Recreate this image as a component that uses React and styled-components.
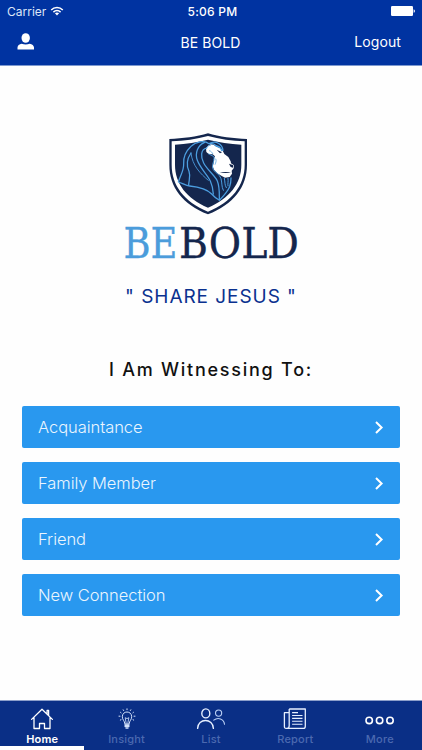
import styled, { createGlobalStyle } from "styled-components";

const options = ["Acquaintance", "Family Member", "Friend", "New Connection"];

const tabs = [
    { name: "Home", Icon: HomeIcon },
    { name: "Insight", Icon: BulbIcon },
    { name: "List", Icon: PeopleIcon },
    { name: "Report", Icon: ReportIcon },
    { name: "More", Icon: MoreIcon },
];

function WifiIcon() {
    return (
        <svg width="14" height="10" viewBox="0 0 14 10" fill="none" stroke="#fff" strokeWidth="1.5">
            <path d="M1.2 4C4.5 .6 9.5 .6 12.8 4" />
            <path d="M3.4 6.1C5.5 4.1 8.5 4.1 10.6 6.1" />
            <path d="M4.9 7.3C6.1 6.2 7.9 6.2 9.1 7.3L7 9.5Z" fill="#fff" stroke="none" />
        </svg>
    );
}

function BatteryIcon() {
    return (
        <svg width="26" height="10" viewBox="0 0 26 10" fill="#fff">
            <rect x="1" y="0" width="22" height="10" rx="1.2" />
            <path d="M23.6 3.2C25.4 3.6 25.4 6.4 23.6 6.8Z" />
        </svg>
    );
}

function UserIcon() {
    return (
        <svg width="18" height="18" viewBox="0 0 18 18" fill="#fff">
            <ellipse cx="8.7" cy="5" rx="4.2" ry="4.8" />
            <path d="M.5 16.4V14.4C.5 12.5 2.3 11.3 4.7 10.7C7.2 11.8 10.2 11.8 12.7 10.7C15.1 11.3 17 12.5 17 14.4V16.4Z" />
        </svg>
    );
}

function Shield() {
    return (
        <svg width="94" height="88" viewBox="0 0 282 264" fill="none">
            <path d="M132 10C166 20 208 26 249 27V104C249 172 208 222 132 253C56 222 16 172 16 104V27C56 26 98 20 132 10Z" fill="#14264d" />
            <path d="M132 18C166 27 204 33 242 34V104C242 167 203 215 132 245C61 215 23 167 23 104V34C60 33 98 27 132 18Z" fill="#fff" />
            <path d="M132 29C164 37 198 42 232 44V104C232 161 196 205 132 233C68 205 33 161 33 104V44C66 42 100 37 132 29Z" fill="#14264d" />
            <path d="M126 54L132 47L140 43L149 44L157 50L168 54L175 60L181 72L193 81L200 94L201 100L210 106L209 115L203 122L204 131L197 141L183 143L172 137L160 130L150 119L146 109L150 95L150 84L153 79L146 73L134 72L127 66Z" fill="#fff" />
            <g stroke="#4c9ee0" strokeWidth="3.8" strokeLinecap="round" strokeLinejoin="round">
                <path d="M158 48C151 42 144 39 135 41C121 30 96 34 80 50C63 66 58 86 59 101C60 123 50 133 43 156C55 159 65 167 77 168C106 171 129 177 143 192C150 200 158 206 166 211C178 198 190 186 197 170C200 161 201 153 201 144" />
                <path d="M136 41C155 30 175 42 177 61M157 48C167 49 171 55 173 62" />
                <path d="M122 37C101 46 92 69 100 91C108 114 130 134 139 153C144 164 147 177 148 192" />
                <path d="M128 54C109 58 110 82 119 99C130 120 153 137 160 153C167 170 166 187 166 208" />
                <path d="M81 69C85 107 109 131 133 151" strokeWidth="2.6" />
                <path d="M81 69C66 91 67 107 75 124C81 140 74 152 74 165" />
                <path d="M134 72C144 77 153 79 150 87C149 99 142 107 148 119C155 130 167 132 171 146C175 161 172 169 178 181" strokeWidth="3" />
                <path d="M181 145C184 157 181 164 187 173M192 145C194 154 190 162 192 168" strokeWidth="3" />
            </g>
            <path d="M158 59L174 67L168 70ZM195 101L208 106L207 113L200 111ZM167 126C180 130 190 129 201 127C189 125 179 127 167 126Z" fill="#14264d" />
            <path d="M126 57L132 48L141 45M135 62C141 62 144 68 147 72M155 86C158 93 155 98 153 104" stroke="#4c9ee0" strokeWidth="2.2" />
        </svg>
    );
}

function Wordmark() {
    return (
        <WordmarkSvg width="180" height="52" viewBox="0 0 180 52">
            <text x="2.4" y="41" fill="#4b9cdb" stroke="#4b9cdb" textLength="54" lengthAdjust="spacingAndGlyphs">BE</text>
            <text x="58" y="41" fill="#14264d" stroke="#14264d" textLength="120" lengthAdjust="spacingAndGlyphs">BOLD</text>
        </WordmarkSvg>
    );
}

function Chevron() {
    return (
        <svg width="9" height="13" viewBox="0 0 9 13" fill="none" stroke="#fff" strokeWidth="2">
            <path d="M1 1L6.6 6.5L1 12" />
        </svg>
    );
}

function HomeIcon() {
    return (
        <svg width="24" height="22" viewBox="0 0 24 22" fill="none" stroke="#fff" strokeWidth="1.3" strokeLinejoin="round" strokeLinecap="round">
            <path d="M1.6 11.4L12 1.3L22.4 11.4M17.1 5.8V2.3H18.6V7.4M4 9.6V20.5H9.5V15.5H14.5V20.5H20V9.6" />
        </svg>
    );
}

function BulbIcon() {
    return (
        <svg width="24" height="22" viewBox="0 0 24 22" fill="none" stroke="#d5e3fb" strokeWidth="1" strokeLinecap="round">
            <path d="M9.8 15.5C9.7 12.8 7.3 11.8 7.3 8.8C7.3 2.4 16.7 2.4 16.7 8.8C16.7 11.8 14.3 12.8 14.2 15.5Z" />
            <path d="M11.1 15L10.2 9.7L12 10.6L13.8 9.7L12.9 15" strokeWidth=".8" />
            <path d="M9.9 17H14.1M10.1 18.5H13.9M11 20.1H13" strokeWidth="1.4" />
            <path d="M12 .8V1.7M8.2 1.8L8.6 2.5M15.8 1.8L15.4 2.5M5.5 4.3L6.1 4.8M18.5 4.3L17.9 4.8M4 8.2H5M19 8.2H20M5.3 12.1L6 11.7M18.7 12.1L18 11.7" />
        </svg>
    );
}

function PeopleIcon() {
    return (
        <svg width="30" height="22" viewBox="0 0 30 22" fill="none" stroke="#e6efff" strokeWidth="1.4" strokeLinecap="round">
            <ellipse cx="9.8" cy="5.4" rx="4" ry="4.5" />
            <path d="M1.6 20.4C1.8 9.8 17.2 9.8 17.4 20.4" />
            <g stroke="#b9cef4" strokeWidth="1.1">
                <circle cx="22.6" cy="5.1" r="3.1" />
                <path d="M17.8 12.2C21.9 8.8 28 10.9 28.5 16.2" />
            </g>
        </svg>
    );
}

function ReportIcon() {
    return (
        <svg width="24" height="22" viewBox="0 0 24 22" fill="none" stroke="#e6efff" strokeWidth="1.3" strokeLinejoin="round">
            <path d="M6.2 1H22.3V18.2C22.3 19.8 21.6 20.4 20.3 20.4H3.2C1.8 20.4 1.4 19.7 1.4 18.4V4.7H6.2M6.2 1V17.8C6.2 19.5 5.5 20.3 4 20.3" />
            <path d="M9.1 4.6H15M9.1 7.5H19.5M9.1 10.4H19.5M9.1 13.3H19.5M9.1 16.2H19.5" strokeWidth="1.1" />
        </svg>
    );
}

function MoreIcon() {
    return (
        <svg width="30" height="22" viewBox="0 0 30 22" fill="none" stroke="#fff" strokeWidth="1.6">
            <circle cx="4.2" cy="12.4" r="3.2" />
            <circle cx="14.6" cy="12.4" r="3.2" />
            <circle cx="25" cy="12.4" r="3.2" />
        </svg>
    );
}

export default function App() {
    return (
        <>
            <GlobalStyle />
            <Screen>
                <Header>
                    <StatusBar>
                        <Carrier>Carrier <WifiIcon /></Carrier>
                        <Clock>5:06 PM</Clock>
                        <Battery><BatteryIcon /></Battery>
                    </StatusBar>
                    <NavBar>
                        <Profile><UserIcon /></Profile>
                        <Title>BE BOLD</Title>
                        <Logout>Logout</Logout>
                    </NavBar>
                </Header>

                <Content>
                    <Shield />
                    <Wordmark />
                    <Slogan>" SHARE JESUS "</Slogan>
                    <Question>I Am Witnessing To:</Question>
                    <Options>
                        {options.map((option) => (
                            <Option key={option}>
                                {option}
                                <Chevron />
                            </Option>
                        ))}
                    </Options>
                </Content>

                <TabBar>
                    {tabs.map(({ name, Icon }, index) => (
                        <Tab key={name} $active={index === 0}>
                            <Icon />
                            <span>{name}</span>
                        </Tab>
                    ))}
                </TabBar>
            </Screen>
        </>
    );
}

const GlobalStyle = createGlobalStyle`
    * {
        box-sizing: border-box;
    }

    body {
        margin: 0;
        font-family: Inter, "Liberation Sans", sans-serif;
    }

    svg {
        display: block;
        flex-shrink: 0;
    }
`;

const Screen = styled.div`
    display: flex;
    flex-direction: column;
    width: 422px;
    height: 750px;
    background: #fefefe;
    overflow: hidden;
`;

const Header = styled.header`
    height: 66px;
    background: #0033a1;
    border-bottom: 1px solid #7d99d0;
    color: #fff;
`;

const StatusBar = styled.div`
    display: grid;
    grid-template-columns: 1fr auto 1fr;
    align-items: center;
    height: 22px;
    padding: 0 6px 0 7px;
    font-size: 12px;
`;

const Carrier = styled.div`
    display: flex;
    align-items: center;
    gap: 4px;
    color: #dde6f7;
`;

const Clock = styled.div`
    padding-left: 2px;
    font-weight: 500;
    letter-spacing: 0.25px;
`;

const Battery = styled.div`
    justify-self: end;
`;

const NavBar = styled.div`
    display: grid;
    grid-template-columns: 1fr auto 1fr;
    align-items: center;
    height: 41px;
    padding: 0 21px 0 17px;
    font-size: 14px;
`;

const Profile = styled.div`
    padding-bottom: 2px;
`;

const Title = styled.h1`
    margin: 0;
    padding-left: 3px;
    font-size: 14px;
    font-weight: 400;
    letter-spacing: 0.1px;
`;

const Logout = styled.div`
    justify-self: end;
    padding-bottom: 2px;
    letter-spacing: 0.1px;
`;

const Content = styled.main`
    flex: 1;
    display: flex;
    flex-direction: column;
    align-items: center;
    padding: 64px 22px 0;
`;

const WordmarkSvg = styled.svg`
    margin-top: -1px;
    font-family: "DejaVu Serif Condensed", "DejaVu Serif", serif;
    font-size: 42px;
    stroke-width: 0.3px;
`;

const Slogan = styled.p`
    margin: 16px 0 0;
    color: #0a318f;
    font-size: 19px;
    line-height: 24px;
    letter-spacing: 0.95px;
`;

const Question = styled.h2`
    margin: 49px 0 0;
    color: #111;
    font-size: 18px;
    font-weight: 500;
    line-height: 24px;
    letter-spacing: 1.75px;
`;

const Options = styled.div`
    display: flex;
    flex-direction: column;
    gap: 14px;
    width: 100%;
    margin-top: 24px;
`;

const Option = styled.div`
    display: flex;
    align-items: center;
    justify-content: space-between;
    height: 42px;
    padding: 0 16px;
    background: #2998ef;
    border-radius: 2px;
    color: #eaf5fe;
    font-size: 16.5px;
    font-weight: 300;
    letter-spacing: -0.05px;
`;

const TabBar = styled.nav`
    display: flex;
    height: 50px;
    background: #0a2f86;
    border-top: 1px solid #8c9fca;
`;

const Tab = styled.div`
    flex: 1;
    display: flex;
    flex-direction: column;
    align-items: center;
    padding-top: 7px;
    border-bottom: 4px solid ${({ $active }) => ($active ? "#fff" : "transparent")};
    color: ${({ $active }) => ($active ? "#fff" : "#4b69b0")};
    font-size: 11px;
    font-weight: ${({ $active }) => ($active ? 600 : 500)};
    line-height: 14px;
    letter-spacing: 0.2px;

    span {
        margin-top: 2px;
    }
`;
